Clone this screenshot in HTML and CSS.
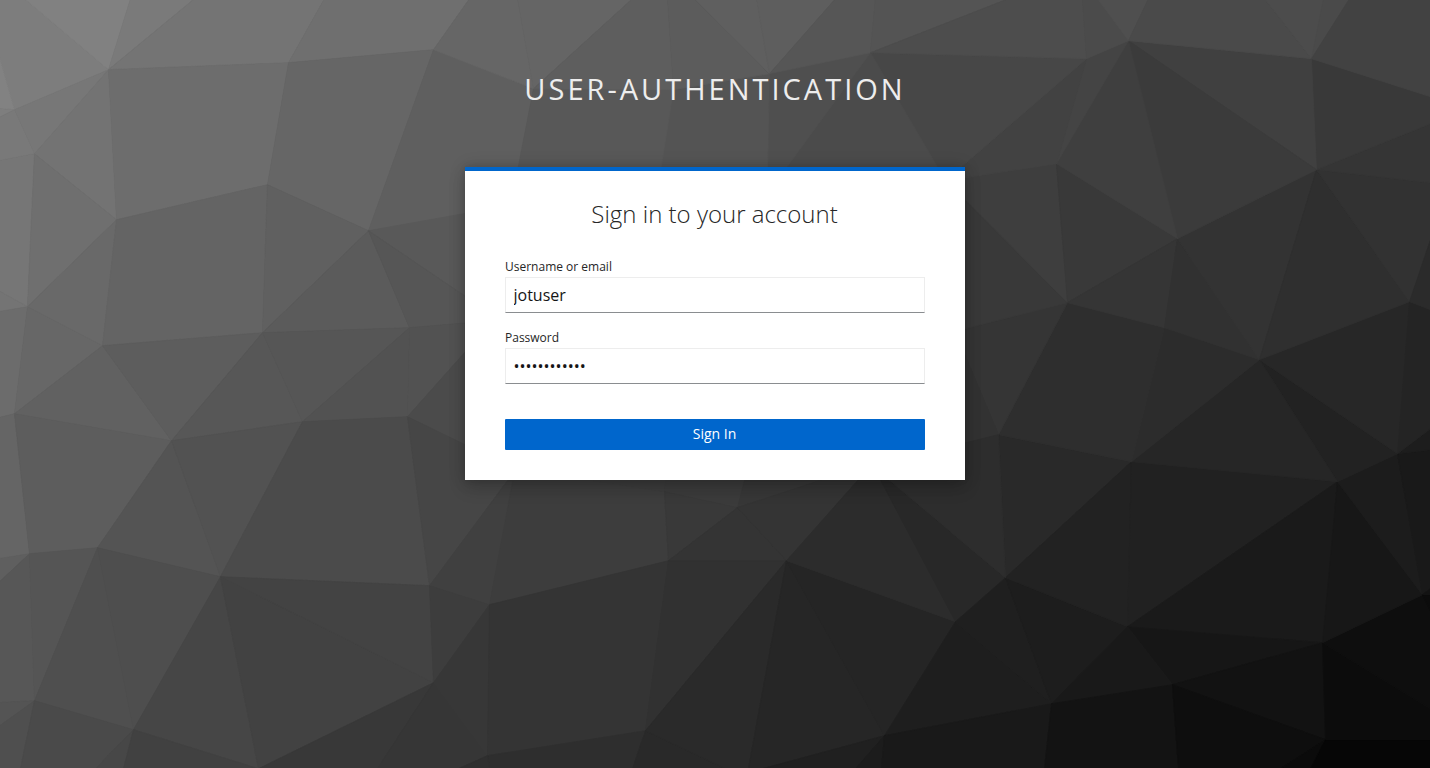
FILE: index.html
```html
<!DOCTYPE html>
<html lang="en">
<head>
<meta charset="utf-8">
<title>Sign in to user-authentication</title>
<link rel="stylesheet" href="styles.css">
</head>
<body>
<svg class="backdrop" viewBox="0 0 1430 768" aria-hidden="true"></svg>
<main class="login">
  <header class="realm">user-authentication</header>
  <section class="card">
    <h1 class="card-title">Sign in to your account</h1>
    <form class="form">
      <div class="field">
        <label class="label" for="username">Username or email</label>
        <input class="input" id="username" type="text" value="jotuser">
      </div>
      <div class="field">
        <label class="label" for="password">Password</label>
        <input class="input" id="password" type="password" value="abcdefghijkl">
      </div>
      <button class="submit" type="button">Sign In</button>
    </form>
  </section>
</main>
<script src="backdrop.js"></script>
</body>
</html>
```
FILE: backdrop.js
```js
// Low-poly backdrop: each facet is [grey level in hex, polygon points].
const facets = [
  ['7d', '-2,-2 24,-2 108,69 14,109 -2,53'],
  ['81', '24,-2 130,-2 108,69'],
  ['7a', '130,-2 194,-2 108,69'],
  ['74', '194,-2 324,-2 288,62 108,69'],
  ['6f', '324,-2 469,-2 433,49 288,62'],
  ['82', '-2,53 14,109 -2,108'],
  ['7e', '-2,108 14,109 -2,117'],
  ['79', '-2,117 14,109 34,153 -2,160'],
  ['77', '14,109 108,69 34,153'],
  ['73', '34,153 108,69 116,219'],
  ['6d', '108,69 288,62 267,184 116,219'],
  ['66', '288,62 433,49 368,230 267,184'],
  ['5f', '433,49 533,88 518,167 480,213 368,230'],
  ['76', '-2,160 34,153 27,306 -2,290'],
  ['74', '-2,290 27,306 -2,311'],
  ['6f', '34,153 116,219 27,306'],
  ['69', '27,306 116,219 102,345'],
  ['64', '116,219 267,184 262,332 102,345'],
  ['60', '267,184 368,230 262,332'],
  ['5b', '262,332 368,230 409,327'],
  ['59', '368,230 480,210 480,306'],
  ['56', '368,230 480,306 480,321 409,327'],
  ['6c', '-2,311 27,306 14,413 -2,417'],
  ['67', '27,306 102,345 14,413'],
  ['61', '14,413 102,345 171,440'],
  ['5d', '102,345 262,332 171,440'],
  ['57', '171,440 262,332 302,421'],
  ['56', '262,332 409,327 302,421'],
  ['52', '302,421 409,327 407,416'],
  ['52', '407,416 409,327 480,321 480,334'],
  ['4b', '407,416 480,334 480,452'],
  ['65', '-2,417 14,413 29,553 -2,558'],
  ['5d', '14,413 171,440 97,547 29,553'],
  ['54', '97,547 171,440 220,576'],
  ['52', '171,440 302,421 220,576'],
  ['4b', '220,576 302,421 407,416 429,585'],
  ['46', '407,416 520,471 507,480 429,585'],
  ['5f', '-2,558 29,553 -2,582'],
  ['57', '-2,582 29,553 34,700 -2,702'],
  ['55', '29,553 97,547 34,700'],
  ['4f', '97,547 133,729 34,700'],
  ['4e', '97,547 220,576 133,729'],
  ['46', '220,576 258,768 133,729'],
  ['42', '220,576 433,682 258,768'],
  ['43', '220,576 429,585 433,682'],
  ['54', '-2,702 34,700 -2,726'],
  ['4f', '-2,726 34,700 20,768 -2,768'],
  ['4a', '34,700 133,729 95,768 20,768'],
  ['47', '133,729 123,768 95,768'],
  ['41', '133,729 258,768 123,768'],
  ['40', '429,585 507,480 513,480 489,604'],
  ['3d', '429,585 489,604 433,682'],
  ['38', '433,682 377,768 258,768'],
  ['36', '433,682 487,755 458,768 377,768'],
  ['37', '433,682 489,604 487,755'],
  ['3d', '489,604 515,465 592,479 664,491 668,560'],
  ['34', '489,604 668,560 645,730 487,755'],
  ['2e', '487,755 645,730 632,768 489,768'],
  ['2f', '487,755 489,768 458,768'],
  ['3c', '592,480 592,460 667,460 664,491'],
  ['3b', '664,491 667,460 750,460 737,507'],
  ['39', '664,491 737,507 668,560'],
  ['37', '737,507 749,460 880,460'],
  ['34', '668,560 737,507 786,560'],
  ['34', '737,507 873,462 786,560'],
  ['31', '668,560 786,560 645,730'],
  ['29', '645,730 725,768 632,768'],
  ['2a', '645,730 786,560 748,768 725,768'],
  ['26', '786,560 884,735 762,768 748,768'],
  ['25', '786,560 955,621 884,735'],
  ['2c', '786,560 873,462 955,621'],
  ['28', '873,466 1005,577 955,621'],
  ['2d', '873,466 873,440 998,434 1005,577'],
  ['20', '884,735 855,768 762,768'],
  ['1c', '884,735 881,768 855,768'],
  ['1e', '884,735 955,621 1051,703'],
  ['19', '884,735 1051,703 1044,768 881,768'],
  ['1f', '955,621 1005,577 1051,703'],
  ['1d', '1005,577 1127,626 1051,703'],
  ['29', '998,434 1131,461 1005,577'],
  ['22', '1005,577 1131,461 1127,626'],
  ['21', '1131,461 1337,481 1127,626'],
  ['1a', '1127,626 1337,481 1322,642'],
  ['16', '1127,626 1322,642 1172,684'],
  ['19', '1127,626 1172,684 1051,703'],
  ['13', '1051,703 1172,684 1178,768 1044,768'],
  ['12', '1172,684 1322,642 1325,739'],
  ['0e', '1172,684 1325,739 1280,768 1178,768'],
  ['0b', '1325,739 1310,768 1280,768'],
  ['06', '1325,739 1430,739 1430,768 1310,768'],
  ['0c', '1322,642 1430,708 1430,739 1325,739'],
  ['0e', '1322,642 1422,594 1430,610 1430,708'],
  ['17', '1337,481 1422,594 1322,642'],
  ['1c', '1337,481 1397,453 1422,594'],
  ['19', '1397,453 1430,449 1430,588 1422,594'],
  ['0c', '1422,594 1430,594 1430,610'],
  ['13', '1422,594 1430,588 1430,594'],
  ['1d', '1397,453 1430,428 1430,449'],
  ['22', '1259,359 1397,453 1337,481'],
  ['26', '1131,461 1259,359 1337,481'],
  ['27', '1259,359 1409,301 1397,453'],
  ['24', '1409,301 1430,309 1430,428 1397,453'],
  ['2c', '1164,327 1259,359 1131,461'],
  ['2e', '1067,302 1164,327 1131,461 998,434'],
  ['35', '950,332 1067,302 998,434 950,320'],
  ['32', '950,320 998,434 950,446'],
  ['2d', '950,446 998,434 1005,577 950,531'],
  ['39', '945,180 1067,302 945,333'],
  ['3e', '945,179 1056,163 1067,302'],
  ['39', '1056,163 1177,238 1067,302'],
  ['35', '1067,302 1177,238 1164,327'],
  ['31', '1177,238 1259,359 1164,327'],
  ['33', '1177,238 1316,169 1259,359'],
  ['2f', '1316,169 1409,301 1259,359'],
  ['32', '1316,169 1430,182 1430,239 1409,301'],
  ['2b', '1409,301 1430,239 1430,309'],
  ['35', '1316,169 1430,123 1430,182'],
  ['39', '1311,58 1430,96 1430,123 1316,169'],
  ['40', '1128,40 1311,58 1316,169'],
  ['3b', '1128,40 1316,169 1177,238'],
  ['3f', '1056,163 1128,40 1177,238'],
  ['44', '1086,58 1128,40 1056,163'],
  ['42', '1086,58 1056,163 945,180'],
  ['47', '870,52 1086,58 945,180'],
  ['4b', '870,52 945,180 786,167'],
  ['4f', '870,52 769,73 767,167 786,167'],
  ['54', '673,89 769,73 767,170 659,170'],
  ['58', '533,88 673,89 660,170 517,170'],
  ['66', '469,-2 517,-2 533,88 433,49'],
  ['65', '517,-2 632,-2 533,88'],
  ['5e', '632,-2 667,-2 673,89 533,88'],
  ['5c', '667,-2 694,-2 769,73 673,89'],
  ['5f', '694,-2 756,-2 769,73'],
  ['5e', '756,-2 835,-2 769,73'],
  ['56', '835,-2 875,-2 870,52 769,73'],
  ['54', '875,-2 1008,-2 870,52'],
  ['4d', '1008,-2 1082,-2 1086,58 870,52'],
  ['4b', '1082,-2 1097,-2 1128,40 1086,58'],
  ['4f', '1097,-2 1148,-2 1128,40'],
  ['4a', '1148,-2 1264,-2 1311,58 1128,40'],
  ['4c', '1264,-2 1323,-2 1311,58'],
  ['4a', '1323,-2 1349,-2 1311,58'],
  ['42', '1349,-2 1430,-2 1430,96 1311,58']
];

const backdrop = document.querySelector('.backdrop');
const mesh = document.createElementNS('http://www.w3.org/2000/svg', 'g');
mesh.setAttribute('transform', 'translate(0.5 0.7)');
for (const [level, points] of facets) {
  const facet = document.createElementNS('http://www.w3.org/2000/svg', 'polygon');
  const colour = '#' + level.repeat(3);
  facet.setAttribute('points', points);
  facet.setAttribute('fill', colour);
  facet.setAttribute('stroke', colour);
  mesh.append(facet);
}
backdrop.append(mesh);
```
FILE: styles.css
```css
* { box-sizing: border-box; }

body {
  margin: 0;
  height: 768px;
  overflow: hidden;
  background: #3a3a3a;
  color: #151515;
  font-family: "Open Sans", sans-serif;
}

.backdrop {
  position: absolute;
  inset: 0;
  width: 1430px;
  height: 768px;
  stroke-width: 0.8;
}

.login {
  position: relative;
  display: flex;
  flex-direction: column;
  align-items: center;
}

.realm {
  padding: 62px 10px 52px;
  color: #ededed;
  font-size: 29px;
  line-height: 53px;
  letter-spacing: 3px;
  text-transform: uppercase;
  white-space: nowrap;
}

.card {
  width: 500px;
  height: 313px;
  padding: 0 40px;
  background: #fff;
  border-top: 4px solid #06c;
  box-shadow: 0 8px 16px rgba(3, 3, 3, .16), 0 0 6px rgba(3, 3, 3, .08), 0 0 16px rgba(3, 3, 3, .14);
}

.card-title {
  margin: 0;
  padding: 27px 1px 28px 0;
  color: #262626;
  font-size: 24px;
  font-weight: 300;
  line-height: 32px;
  text-align: center;
}

.form {
  display: flex;
  flex-direction: column;
}

.field {
  height: 71px;
}

.label {
  display: block;
  height: 19px;
  color: #262626;
  font-size: 12px;
  line-height: 18px;
}

.input {
  display: block;
  width: 100%;
  height: 36px;
  padding: 4px 8px 4px 7.5px;
  border: 1px solid #ededed;
  border-bottom-color: #8a8d90;
  border-radius: 0;
  background: #fff;
  color: #151515;
  font: 16px/24px "Open Sans", sans-serif;
  outline: 0;
}

.submit {
  height: 31px;
  margin-top: 19px;
  padding: 0 1px 2px 0;
  border: 0;
  border-radius: 1px;
  background: #06c;
  color: #fff;
  font: 14px/21px "Open Sans", sans-serif;
}
```
